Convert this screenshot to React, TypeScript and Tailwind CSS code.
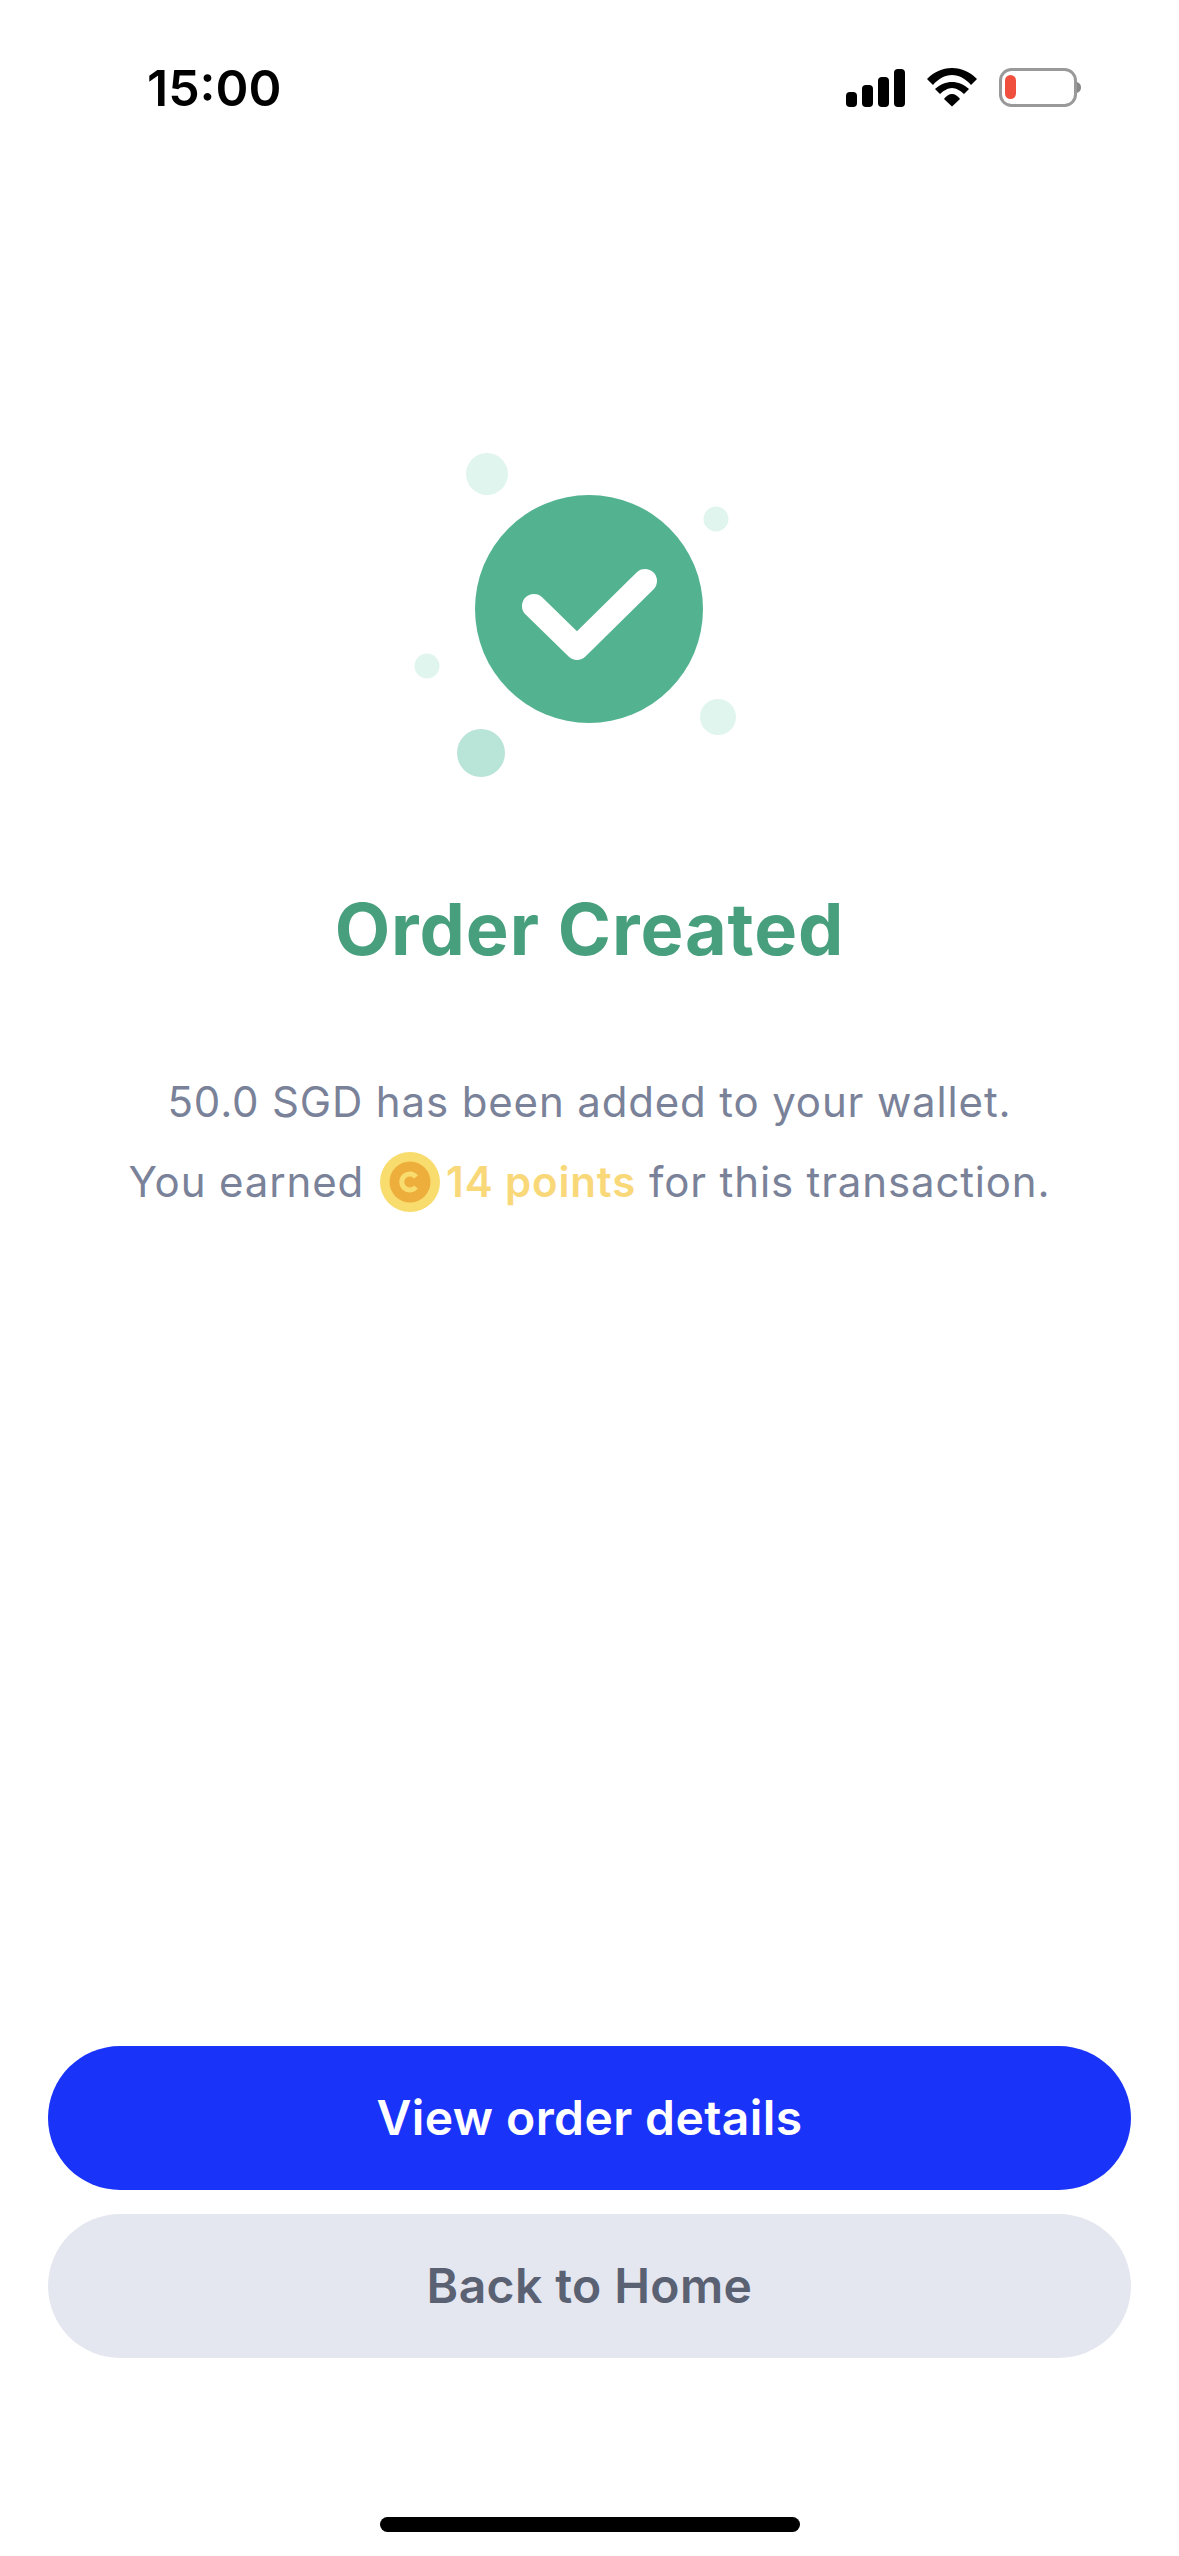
const StatusIcons = () => (
  <svg width="240" height="44" viewBox="0 0 240 44" className="block">
    <rect x="5" y="25" width="11" height="15" rx="4" fill="#000" />
    <rect x="21" y="18" width="11" height="22" rx="4" fill="#000" />
    <rect x="37" y="10" width="11" height="30" rx="4" fill="#000" />
    <rect x="53" y="2" width="11" height="38" rx="4" fill="#000" />
    <path d="M86 12C93 5 101 1 111 1C121 1 129 5 136 12L130 18C125 12 118 8 111 8C104 8 97 12 92 18Z" fill="#000" />
    <path d="M94 22C99 17.500 105 15 111 15C117 15 123 17.500 128 22L123 27C120 24 115 21 111 21C107 21 102 24 99 27Z" fill="#000" />
    <path d="M103 32C105 29 108 27 111 27C114 27 117 29 119 32L111 39.500Z" fill="#000" />
    <rect x="159.500" y="2.500" width="75" height="36" rx="11" fill="none" stroke="#999" strokeWidth="3" />
    <rect x="164" y="8" width="11" height="24" rx="5.500" fill="#EF4F3C" />
    <path d="M236 15C239 16 240 18 240 20.500C240 23 239 25 236 26Z" fill="#888" />
  </svg>
);

const SuccessArt = () => (
  <svg width="379" height="340" viewBox="0 0 379 340" className="block">
    <circle cx="87" cy="34" r="21" fill="#E0F5EE" />
    <circle cx="316" cy="79" r="12.500" fill="#E0F5EE" />
    <circle cx="27" cy="226" r="12.500" fill="#E0F5EE" />
    <circle cx="318" cy="277" r="18" fill="#E0F5EE" />
    <circle cx="81" cy="313" r="24" fill="#B9E4D8" />
    <circle cx="189" cy="169" r="114" fill="#53B391" />
    <path d="M134 166L177 208L245 141" fill="none" stroke="#fff" strokeWidth="24" strokeLinecap="round" strokeLinejoin="round" />
  </svg>
);

const Coin = () => (
  <svg width="60" height="60" viewBox="0 0 60 60" className="block shrink-0">
    <circle cx="30" cy="30" r="30" fill="#F9DC6E" />
    <circle cx="30" cy="30" r="20.500" fill="#EDAE3C" />
    <path d="M36 25A8 8 0 1 0 36 35" fill="none" stroke="#F9DC6E" strokeWidth="5" />
  </svg>
);

export default function App() {
  return (
    <div className="flex h-[2556px] w-[1179px] flex-col items-center bg-white font-['Inter',sans-serif]">
      <div className="flex h-[440px] w-full items-start justify-between pl-[147px] pr-[98px] pt-[60px]">
        <span className="text-[50px] leading-[56px] font-semibold text-black">15:00</span>
        <div className="pt-[7px]">
          <StatusIcons />
        </div>
      </div>

      <SuccessArt />

      <h1 className="mt-[104px] text-[72px] leading-[90px] font-bold tracking-[0.9px] text-[#479F7D]">Order Created</h1>

      <div className="mt-[88px] flex flex-col items-center text-[42px] leading-[80px] font-normal tracking-[0.85px] text-[#7A8299]">
        <p>50.0 SGD has been added to your wallet.</p>
        <p className="flex items-center">
          <span className="mr-[16px]">You earned</span>
          <Coin />
          <span className="ml-[6px] font-semibold text-[#F9D879]">14 points</span>
          <span className="ml-[13px]">for this transaction.</span>
        </p>
      </div>

      <div className="mt-auto flex w-full flex-col gap-[24px] px-[48px]">
        <button className="h-[144px] rounded-full bg-[#1A33F8] text-[48px] font-semibold tracking-[0.4px] text-white">View order details</button>
        <button className="h-[144px] rounded-full bg-[#E4E7EF] text-[48px] font-semibold tracking-[0.4px] text-[#5A6173]">Back to Home</button>
      </div>

      <div className="mt-[159px] mb-[24px] h-[15px] w-[420px] rounded-full bg-black" />
    </div>
  );
}
